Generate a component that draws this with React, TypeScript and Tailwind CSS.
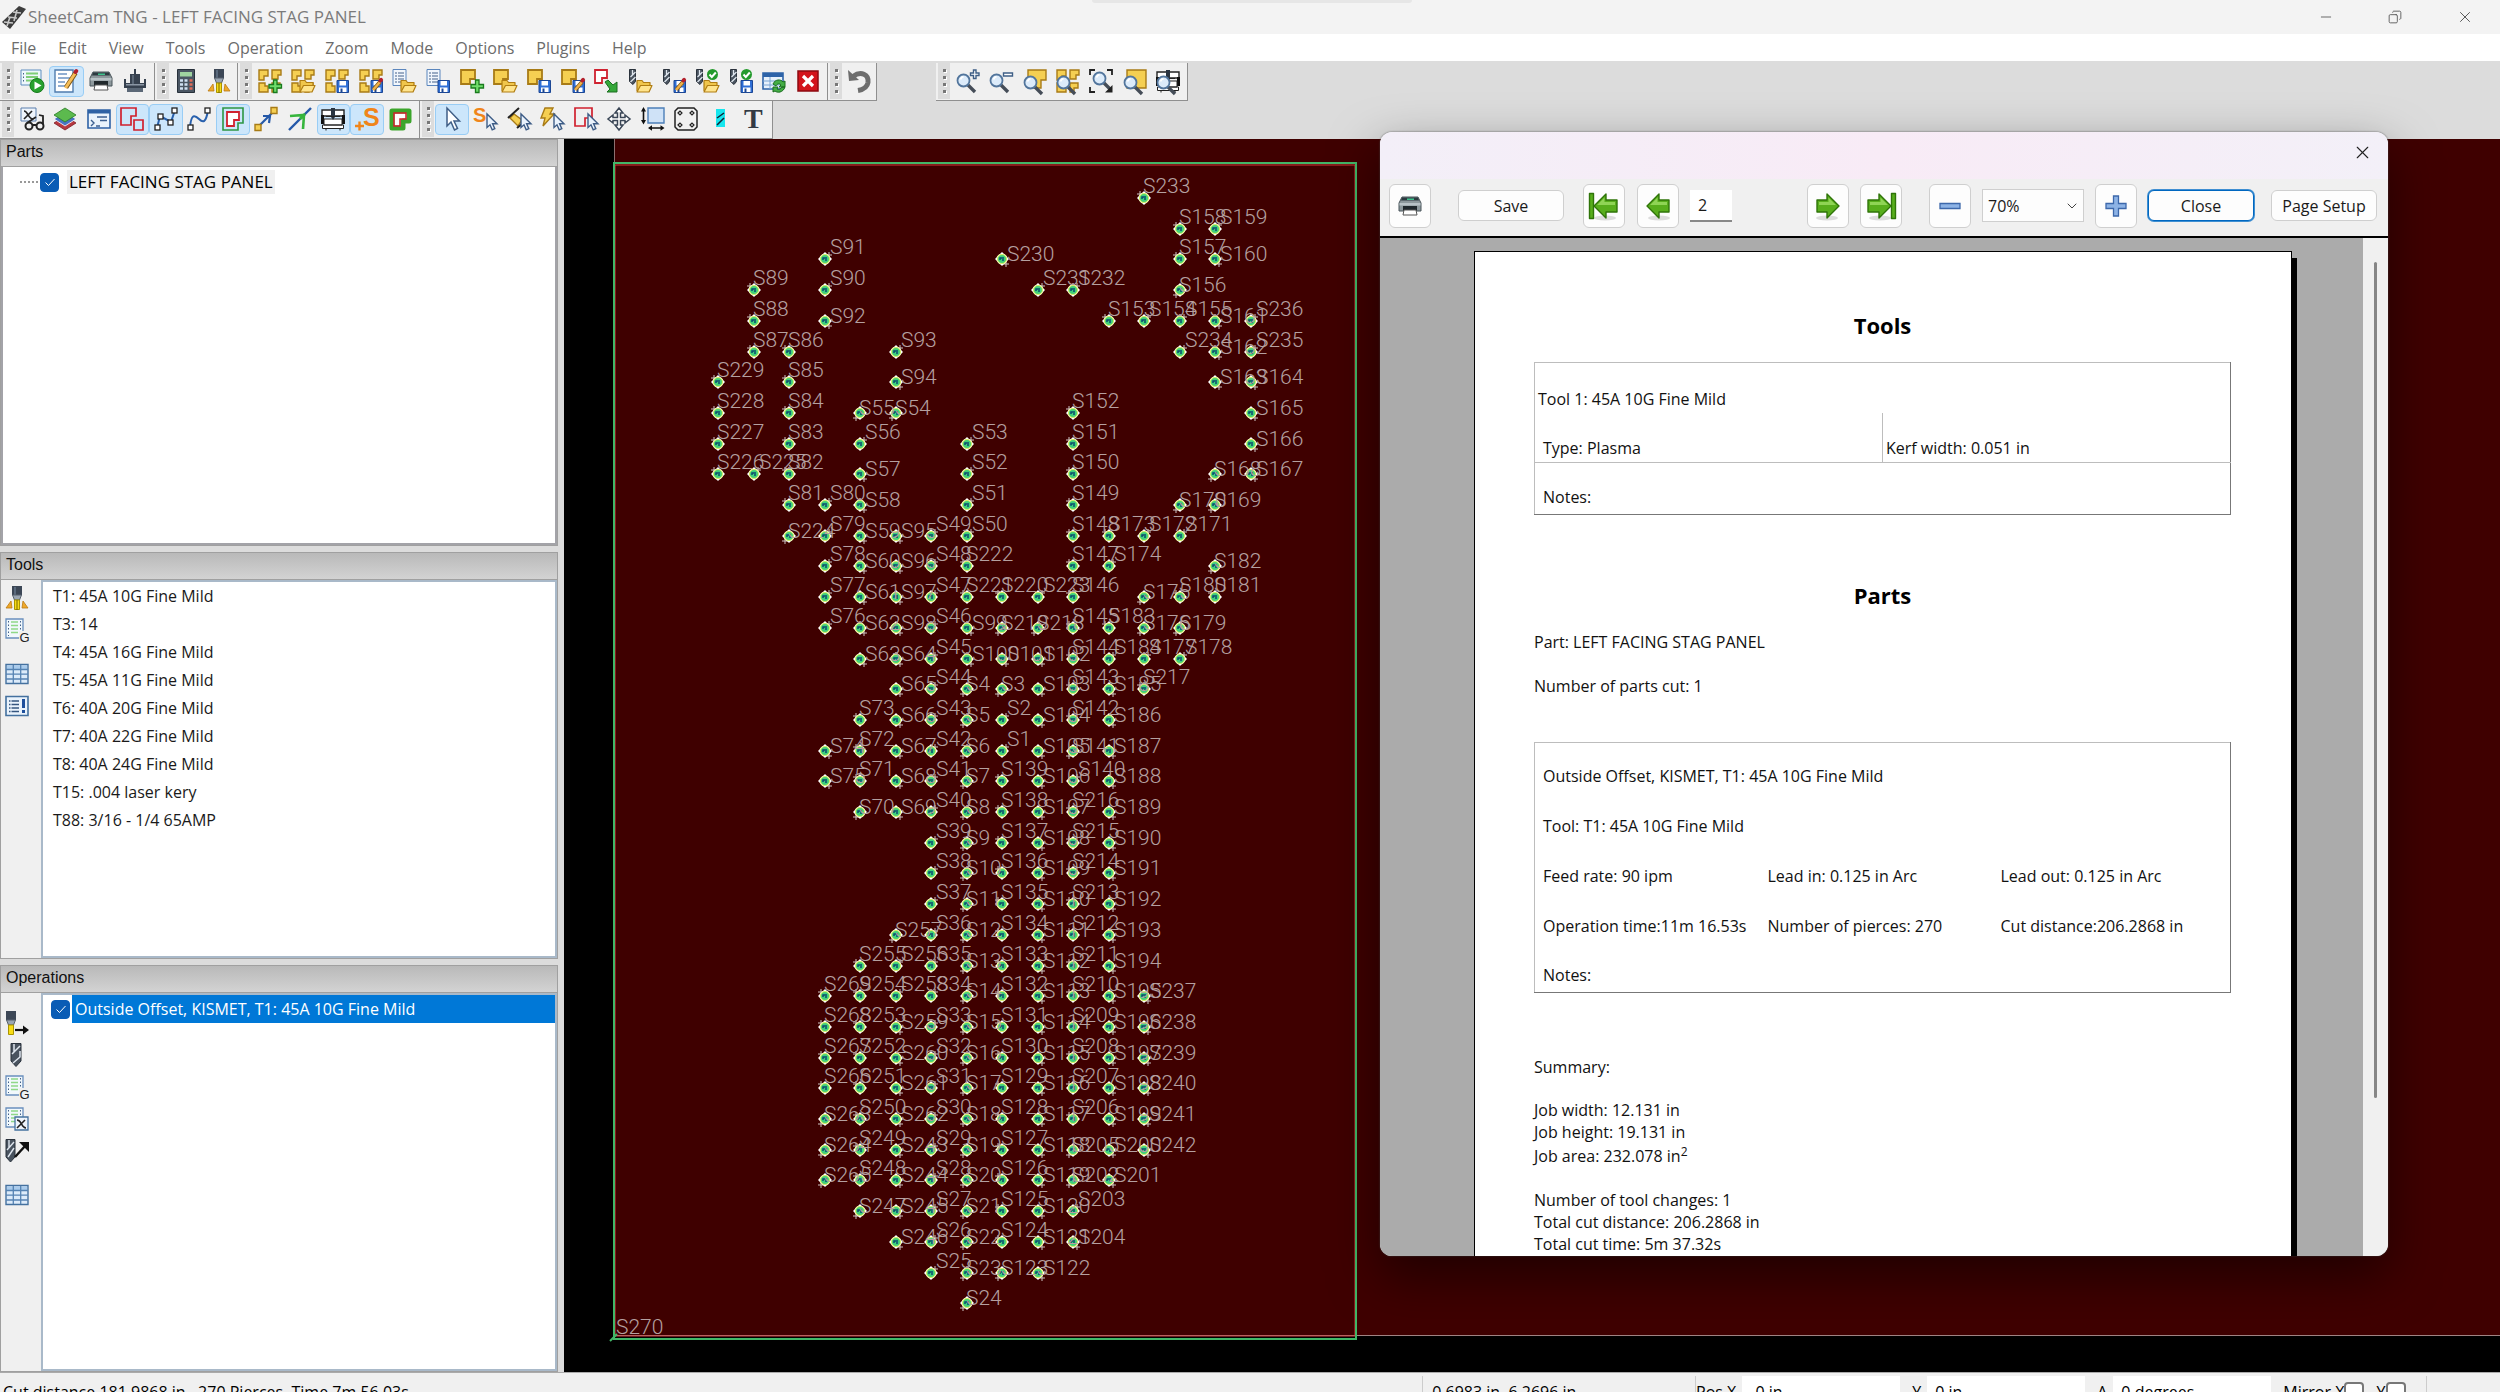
import type { ReactNode } from "react";
import clsx from "clsx";
import { ChevronDown, Copy, Minus, X } from "lucide-react";

/* ---------- icon building blocks, all on a 24x24 grid ---------- */

function Icon({ children }: { children: ReactNode }) {
  return (
    <svg viewBox="0 0 24 24" className="size-6 overflow-visible" fill="none" aria-hidden="true">
      {children}
    </svg>
  );
}

const gold = { fill: "#f5cf52", stroke: "#a87b16", strokeWidth: 1.4 };

const Nest = () => (
  <path {...gold} d="M1 1h9v6H6v4H1zM14 1h9v5h-3v4h-6zM1 14h6v3h3v6H1zM14 14h8v5h-4v4h-4z" />
);
const Part = () => <path {...gold} strokeWidth={1.8} d="M1 1h14v9h-5v5H1z" />;
const Plus = () => (
  <path
    fill="#6fdc6a"
    stroke="#197a1d"
    strokeWidth="1.3"
    d="M15.5 11H19v4.5h4.5V19H19v4.5h-3.5V19H11v-3.5h4.5z"
  />
);
const Folder = () => (
  <g stroke="#b07d12" strokeWidth="1.2" strokeLinejoin="round">
    <path fill="#f0c64c" d="M9 22V11.500h5l1.500 2H22V17" />
    <path fill="#ffe48c" d="M9 23l3.500-6.500H24L21 23z" />
  </g>
);
const Disk = () => (
  <g>
    <path fill="#2f6fd6" stroke="#1c4794" d="M12 11.500h11.500v12H12z" />
    <path fill="#fff" d="M14.500 12h6.500v4.500h-6.500zM14 18.500h7.500V23H14z" />
    <path fill="#1c4794" d="M15.500 19.500h2V23h-2z" />
  </g>
);
const Pencil = () => (
  <g>
    <path stroke="#7d5411" strokeWidth="4" d="M14.500 20.500l6.500-7.500" />
    <path stroke="#f0b24a" strokeWidth="2.6" d="M14 21l7-8" />
    <path stroke="#b3202c" strokeWidth="4" strokeLinecap="round" d="M21.500 11.500l.6-.6" />
  </g>
);
const Bit = () => (
  <g>
    <path fill="#49535f" stroke="#2a323c" d="M1.500.5h6v12L5 15.500l-3.500-3z" />
    <path stroke="#dfe6ee" strokeWidth="1.3" d="M4.500 1v5M7.500 3l-5 5M7.500 8l-5 5" />
  </g>
);
const Good = () => (
  <g>
    <circle cx="17.5" cy="5.5" r="5.5" fill="#239a2c" />
    <path stroke="#fff" strokeWidth="2" d="M14.500 5.500l2.300 2.500 4-4.500" />
  </g>
);
const Doc = () => (
  <g>
    <path fill="#f1f6fc" stroke="#5b86bd" d="M1 .5h13v16H1z" />
    <path stroke="#44618a" strokeWidth="1.2" strokeDasharray="2 1 8" d="M3 4h9M3 7h9M3 10h9M3 13h9" />
  </g>
);
const Torch = () => (
  <g>
    <path fill="#3c4756" d="M7 0h10v9H7z" />
    <path fill="#5a6a7d" d="M9 1h2v8H9z" />
    <path fill="#9aa6b3" stroke="#56616e" d="M7.500 9h9l-2 5h-5z" />
    <path fill="#f8dc15" stroke="#a99400" d="M9.500 14h5v9.500h-5z" />
    <path stroke="#7a6a00" d="M12 14v10" />
    <path fill="#f0a92a" stroke="#ba7a12" strokeWidth=".8" d="M6 15L1 22h6zM18 15l5 7h-6z" />
  </g>
);
const Glass = () => (
  <g>
    <path stroke="#454d58" strokeWidth="3.4" d="M12 16l7 7" />
    <circle cx="7.5" cy="11.5" r="6" fill="#dcebfa" stroke="#52759c" strokeWidth="1.8" />
    <path stroke="#fff" strokeWidth="1.8" d="M4.500 10.500a4 4 0 013-2.800" />
  </g>
);
const LowGlass = () => (
  <g transform="translate(0 2)">
    <Glass />
  </g>
);
const SmallArrow = () => (
  <path
    fill="#eaf3fd"
    stroke="#3d5c86"
    strokeWidth="1.4"
    d="M14 7v13.500l3-2.700 2.200 5 2.600-1.200-2.200-4.800H24z"
  />
);
const Machine = () => (
  <g>
    <path fill="#fff" stroke="#222" strokeWidth="1.4" d="M1 3h22v6H1z" />
    <path fill="#111" d="M0 8h3v9H0zM21 8h3v9h-3z" />
    <path fill="#fff" stroke="#222" d="M3 12h18v6H3zM1.500 18h21v3.500h-21z" />
    <path fill="#2a3440" d="M10 1h4v9l-2 3-2-3z" />
    <path stroke="#222" d="M5 9.500h14M5 22v1.500M19 22v1.500" />
  </g>
);
const Node = ({ x, y }: { x: number; y: number }) => (
  <rect x={x} y={y} width="5" height="5" fill="#fff" stroke="#222" strokeWidth="1.3" />
);
const Grid = () => (
  <g>
    <path fill="#dcebfa" stroke="#44719f" strokeWidth="1.4" d="M1 2.500h22v19H1z" />
    <path fill="#a9cbec" d="M2 3.500h20V7H2z" />
    <path stroke="#5583b3" strokeWidth="1.3" d="M1 7.500h22M1 12.200h22M1 17h22M8.300 3v18M15.700 3v18" />
  </g>
);
const CodeSheet = () => (
  <g>
    <path fill="#f1f8fc" stroke="#6a8fbd" strokeWidth="1.3" d="M1 1h17v19H1z" />
    <path stroke="#8ed888" strokeWidth="1.7" d="M6 4h7M6 7.500h7M6 11h7M6 14.500h7" />
    <path stroke="#44618a" strokeDasharray="1.5 2" d="M3.500 3v15M15.500 3v11" />
  </g>
);

type LetterProps = { x: number; y: number; size: number; color: string; serif?: boolean; children: string };

const Letter = ({ x, y, size, color, serif, children }: LetterProps) => (
  <text
    x={x}
    y={y}
    fontSize={size}
    fill={color}
    fontWeight="bold"
    fontFamily={serif ? "Liberation Serif, serif" : "Liberation Sans, sans-serif"}
  >
    {children}
  </text>
);

function PrinterIcon() {
  return (
    <Icon>
      <path fill="#8d989c" stroke="#49545a" d="M4 3h16l3 6v8H1V9z" />
      <path fill="#2c3a40" d="M4 3.500h16l1 3H3z" />
      <path fill="#3fc28d" d="M9 4.500h7V6H9z" />
      <path fill="#b8c2c6" d="M1.500 9h21v2.500h-21z" />
      <path fill="#20282c" d="M5 12h14v5H5z" />
      <path fill="#fff" stroke="#555" d="M6 16h12l1 5H5z" />
    </Icon>
  );
}

/* ---------- toolbars ---------- */

type Tool = { name: string; icon: ReactNode; active?: boolean };

const jobTools: Tool[] = [
  {
    name: "Run post processor",
    icon: (
      <Icon>
        <path fill="#eef7fb" stroke="#5f8fc0" d="M1 1h20v15H1z" />
        <path stroke="#7fce78" strokeWidth="1.8" d="M6 4.500h12M6 8h12M6 11.500h7" />
        <path stroke="#44618a" strokeDasharray="1.5 2" d="M3.500 4v10" />
        <circle cx="17" cy="16.5" r="7" fill="#28a12e" stroke="#157a1b" />
        <path fill="#fff" d="M14.500 12.500l7 4-7 4z" />
      </Icon>
    ),
  },
  {
    name: "Edit job",
    active: true,
    icon: (
      <Icon>
        <path fill="#fff" stroke="#4f7cae" strokeWidth="1.4" d="M1 1h18v22H1z" />
        <path stroke="#6d94c4" strokeWidth="1.5" d="M4 5h9M4 9h12M4 13h7M4 17h8" />
        <path stroke="#7d5411" strokeWidth="4.6" d="M12 18.500L21.500 4" />
        <path stroke="#f5bd58" strokeWidth="3" d="M11.500 19L21 4.500" />
        <path stroke="#b3202c" strokeWidth="4" strokeLinecap="round" d="M21.500 3l.8-1" />
      </Icon>
    ),
  },
  { name: "Print", icon: <PrinterIcon /> },
  {
    name: "Machine setup",
    icon: (
      <Icon>
        <path fill="#36414f" d="M11 0h2v5h4v9h4v-4h2v9H1v-9h2v4h4V5h4z" />
        <path fill="#5b6877" d="M9 6h2v9H9zM4 19h16v4H4z" />
        <path fill="#8b97a5" d="M3 15h18v1.500H3z" />
      </Icon>
    ),
  },
];

const calcTools: Tool[] = [
  {
    name: "Calculator",
    icon: (
      <Icon>
        <path fill="#4a5663" stroke="#27303a" d="M3.500.5h17v23h-17z" />
        <path fill="#9fd3a0" d="M6 3h12v4.500H6z" />
        <path stroke="#cfe0f2" strokeWidth="2.6" strokeDasharray="3 1.5" d="M6 11.500h8M6 15.500h8M6 19.500h8" />
        <path stroke="#e06c5a" strokeWidth="2.6" d="M15.500 11.500h3M15.500 15.500h3M15.500 19.500h3" />
      </Icon>
    ),
  },
  { name: "New plasma tool", icon: <Icon><Torch /></Icon> },
];

const fileTools: Tool[] = [
  { name: "New job", icon: <Icon><Nest /><Plus /></Icon> },
  { name: "Open job", icon: <Icon><Nest /><Folder /></Icon> },
  { name: "Save job", icon: <Icon><Nest /><Disk /></Icon> },
  { name: "Save job as", icon: <Icon><Nest /><Disk /><Pencil /></Icon> },
  { name: "Open template", icon: <Icon><Doc /><Folder /></Icon> },
  { name: "Save template", icon: <Icon><Doc /><Disk /></Icon> },
  { name: "New part", icon: <Icon><Part /><Plus /></Icon> },
  { name: "Open part", icon: <Icon><Part /><Folder /></Icon> },
  { name: "Save part", icon: <Icon><Part /><Disk /></Icon> },
  { name: "Save part as", icon: <Icon><Part /><Disk /><Pencil /></Icon> },
  {
    name: "Import drawing",
    icon: (
      <Icon>
        <path fill="#fff" stroke="#cf2230" strokeWidth="1.8" d="M1 1h12v8H8v5H1z" />
        <path fill="#35a83a" stroke="#1a6d1f" d="M11 13l3-2 5 5 4-3v10H13l3-3z" />
      </Icon>
    ),
  },
  { name: "Open tool set", icon: <Icon><Bit /><Folder /></Icon> },
  { name: "Save tool set", icon: <Icon><Bit /><Disk /><Pencil /></Icon> },
  { name: "Open operations", icon: <Icon><Bit /><Folder /><Good /></Icon> },
  { name: "Save operations", icon: <Icon><Bit /><Disk /><Good /></Icon> },
  {
    name: "Reload",
    icon: (
      <Icon>
        <path fill="#e7f1fb" stroke="#2d63a8" strokeWidth="1.6" d="M1 4h20v16H1z" />
        <path fill="#2d63a8" d="M1 4h20v4H1z" />
        <path stroke="#7aa5d3" d="M1 12h20M1 16h20M8 8v12" />
        <path
          fill="#44ad45"
          stroke="#1a6d1f"
          d="M11 15c2-5 8-5 10-2l2-1v6h-6l2-2c-2-2-4-1-5 1zM23 18c-2 6-8 6-10 4l-2 1v-5h5l-1 2c2 1 4 0 5-2z"
        />
      </Icon>
    ),
  },
  {
    name: "Stop",
    icon: (
      <Icon>
        <path fill="#d3141c" stroke="#8d0a10" strokeWidth="1.5" d="M2 2h20v20H2z" />
        <path stroke="#fff" strokeWidth="3.2" d="M7 7l10 10M17 7L7 17" />
      </Icon>
    ),
  },
];

const undoTools: Tool[] = [
  {
    name: "Undo",
    icon: (
      <Icon>
        <path stroke="#6d6d6d" strokeWidth="5" d="M6 7.500c8-6 16-2 15 6-.6 4-4 7-10 8" />
        <path fill="#6d6d6d" d="M1 1l1 11 10-1z" />
      </Icon>
    ),
  },
];

const zoomTools: Tool[] = [
  {
    name: "Zoom in",
    icon: (
      <Icon>
        <Glass />
        <path fill="#fff" stroke="#3f5f86" strokeWidth="1.4" d="M17.500 1H20v3h3v2.500h-3v3h-2.500v-3h-3V4h3z" />
      </Icon>
    ),
  },
  {
    name: "Zoom out",
    icon: (
      <Icon>
        <Glass />
        <path fill="#fff" stroke="#3f5f86" strokeWidth="1.4" d="M14.500 4h9v3h-9z" />
      </Icon>
    ),
  },
  { name: "Zoom to part", icon: <Icon><path {...gold} d="M5 1h18v10h-5v8H9V9H5z" /><LowGlass /></Icon> },
  { name: "Zoom to nest", icon: <Icon><Nest /><LowGlass /></Icon> },
  {
    name: "Zoom to fit",
    icon: (
      <Icon>
        <g transform="translate(3 -2)"><Glass /></g>
        <path stroke="#222" strokeWidth="1.8" d="M1 6V1h5M18 1h5v5M1 18v5h5" />
        <path fill="#222" d="M23.500 16v7.500H16z" />
      </Icon>
    ),
  },
  { name: "Zoom to material", icon: <Icon><path {...gold} d="M4 1h19v18H4z" /><LowGlass /></Icon> },
  { name: "Zoom to machine", icon: <Icon><Machine /><LowGlass /></Icon> },
];

const viewTools: Tool[] = [
  {
    name: "Show variables",
    icon: (
      <Icon>
        <path fill="#eef4fb" stroke="#5b7fae" d="M1 1h15v13H1z" />
        <path stroke="#222" strokeWidth="1.7" d="M4 4c4 0 4 8 9 8M12 4l-8 8" />
        <circle cx="9" cy="19" r="3.5" stroke="#222" strokeWidth="2" />
        <circle cx="20" cy="19" r="3.5" stroke="#222" strokeWidth="2" />
        <path stroke="#222" strokeWidth="1.8" d="M7 16l9-6M12.500 18h4M23 17V9l-4-1" />
      </Icon>
    ),
  },
  {
    name: "Layers",
    icon: (
      <Icon>
        <path fill="#b8383f" stroke="#7e1d24" strokeWidth=".8" d="M12 9l11 7-11 7-11-7z" />
        <path fill="#4a74c4" stroke="#fff" strokeWidth=".8" d="M12 5l11 7-11 7-11-7z" />
        <path fill="#5cba4e" stroke="#2a7d24" strokeWidth=".8" d="M12 1l11 7-11 7L1 8z" />
      </Icon>
    ),
  },
  {
    name: "Console",
    icon: (
      <Icon>
        <path fill="#eaf3fc" stroke="#2f62a5" strokeWidth="1.6" d="M1 3h22v18H1z" />
        <path fill="#2f62a5" d="M1 3h22v3.500H1z" />
        <path stroke="#3c5f90" strokeWidth="1.4" d="M10 10h10M13 13.500h7M4 13l3 3-3 3M9 19h4" />
      </Icon>
    ),
  },
  {
    name: "Show paths",
    active: true,
    icon: (
      <Icon>
        <path stroke="#d0202e" strokeWidth="1.7" d="M1 1h15v8h-5v9H1zM14 13h9v10h-9z" />
      </Icon>
    ),
  },
  {
    name: "Show segments",
    active: true,
    icon: (
      <Icon>
        <path stroke="#2860ad" strokeWidth="2" d="M3 21l3-12 11 6 4-12" />
        <Node x={1} y={18} /><Node x={4} y={7} /><Node x={14} y={13} /><Node x={18} y={1} />
      </Icon>
    ),
  },
  {
    name: "Show curves",
    icon: (
      <Icon>
        <path stroke="#2860ad" strokeWidth="2" d="M3 21C4 6 8 8 12 12s7 4 9-9" />
        <Node x={1} y={18} /><Node x={18} y={1} />
      </Icon>
    ),
  },
  {
    name: "Show offsets",
    active: true,
    icon: (
      <Icon>
        <path stroke="#2c9744" strokeWidth="1.6" d="M2 1h20v15h-5v7H2z" />
        <path fill="#fff" stroke="#d0202e" strokeWidth="1.8" d="M6 5h12v8h-5v6H6z" />
      </Icon>
    ),
  },
  {
    name: "Show rapids",
    icon: (
      <Icon>
        <path stroke="#2458a8" strokeWidth="2.2" d="M4 20L20 4M9 9h7l-1 7" />
        <path {...gold} d="M1 17.500h6v6H1zM17 .5h6v6h-6z" />
      </Icon>
    ),
  },
  {
    name: "Show direction",
    icon: (
      <Icon>
        <path stroke="#2458a8" strokeWidth="2.4" d="M1 23L23 1" />
        <path stroke="#36b53c" strokeWidth="2.6" d="M2 9l14-1-1 14M17 7l-5 5" />
      </Icon>
    ),
  },
  { name: "Show machine", active: true, icon: <Icon><Machine /></Icon> },
  {
    name: "Show start points",
    active: true,
    icon: (
      <Icon>
        <Letter x={8} y={19} size={25} color="#f0851a">S</Letter>
        <path stroke="#f0851a" strokeWidth="2.4" d="M0 19h9M4.500 14.500v9" />
      </Icon>
    ),
  },
  {
    name: "Show cut width",
    icon: (
      <Icon>
        <path fill="#fff" stroke="#3ca52b" strokeWidth="5" strokeLinejoin="round" d="M4 4h17v10h-6v7H4z" />
        <path stroke="#d0202e" strokeWidth="1.5" d="M6 6h12v6h-6v7H6z" />
      </Icon>
    ),
  },
];

const modeTools: Tool[] = [
  {
    name: "Select",
    active: true,
    icon: (
      <Icon>
        <path fill="#fff" stroke="#3f5e86" strokeWidth="1.5" d="M7 1v18l4-4 3.500 8 3-1.500L14 14h5.500z" />
      </Icon>
    ),
  },
  { name: "Select start point", icon: <Icon><Letter x={0} y={15} size={20} color="#f0851a">S</Letter><SmallArrow /></Icon> },
  {
    name: "Select tab",
    icon: (
      <Icon>
        <path {...gold} d="M7 7l8 6-4 6-8-8z" />
        <path stroke="#222" strokeWidth="2" d="M1 11L12 1M10 21l6-5" />
        <SmallArrow />
      </Icon>
    ),
  },
  { name: "Quick select", icon: <Icon><path {...gold} d="M5 1h8l-3 6h4L3 19l2-8H1z" /><SmallArrow /></Icon> },
  { name: "Select path", icon: <Icon><path stroke="#d0202e" strokeWidth="1.7" d="M1 1h17v10h-7v8H1z" /><SmallArrow /></Icon> },
  {
    name: "Move part",
    icon: (
      <Icon>
        <path
          fill="#fff"
          stroke="#3a4656"
          strokeWidth="1.5"
          d="M12 1l4 5h-2.500v4.500H18V8l5 4-5 4v-2.500h-4.500V18H16l-4 5-4-5h2.500v-4.500H6V16l-5-4 5-4v2.500h4.500V6H8z"
        />
      </Icon>
    ),
  },
  {
    name: "Measure",
    icon: (
      <Icon>
        <path fill="#cfe2f7" stroke="#4c7fb8" strokeWidth="1.4" d="M7 1h16v15H7z" />
        <path stroke="#111" strokeWidth="1.6" d="M2.500 3v12M9 21h12" />
        <path fill="#111" d="M2.500 0L5 4.500H0zM2.500 17.500L5 13H0zM7 21l4-2.800v5.600zM23.500 21l-4-2.800v5.600z" />
      </Icon>
    ),
  },
  {
    name: "Tabs",
    icon: (
      <Icon>
        <path stroke="#222" strokeWidth="1.5" d="M4 1h16l3 3v16l-3 3H4l-3-3V4z" />
        <path stroke="#222" strokeWidth="1.2" d="M4 6l2-2 2 2-2 2zM16 6l2-2 2 2-2 2zM4 18l2-2 2 2-2 2zM16 18l2-2 2 2-2 2z" />
      </Icon>
    ),
  },
  {
    name: "Hatch",
    icon: (
      <Icon>
        <path fill="#16e6ee" d="M8 2h9v18H8z" />
        <path stroke="#123" strokeWidth="1.5" d="M9 11l7-5M9 18l7-7" />
      </Icon>
    ),
  },
  { name: "Text", icon: <Icon><Letter serif x={3} y={21} size={28} color="#333a44">T</Letter></Icon> },
];

function Toolbar({ tools, className }: { tools: Tool[]; className: string }) {
  return (
    <div
      role="toolbar"
      className={clsx(
        "flex h-full shrink-0 items-center border-r border-b border-[#8f8f8f] bg-[#f0f0f0] pr-0.5 pb-px",
        className
      )}
    >
      <div className="mr-px ml-0.5 flex h-full w-3 shrink-0 flex-col items-center justify-center gap-1 bg-[#dcdcdc]">
        {[0, 1, 2, 3].map((n) => (
          <span key={n} className="size-[3px] bg-[#777] shadow-[1px_1px_0_#fff]" />
        ))}
      </div>
      {tools.map((tool) => (
        <button
          key={tool.name}
          aria-label={tool.name}
          className={clsx(
            "flex h-[31px] flex-1 items-center justify-center rounded-sm border",
            tool.active ? "border-[#99cdf5] bg-[#cce6fb]" : "border-transparent"
          )}
        >
          {tool.icon}
        </button>
      ))}
    </div>
  );
}

/* ---------- left hand panels ---------- */

const toolList = [
  "T1: 45A 10G Fine Mild",
  "T3: 14",
  "T4: 45A 16G Fine Mild",
  "T5: 45A 11G Fine Mild",
  "T6: 40A 20G Fine Mild",
  "T7: 40A 22G Fine Mild",
  "T8: 40A 24G Fine Mild",
  "T15: .004 laser kery",
  "T88: 3/16 - 1/4 65AMP",
];

const ruledIcon = (
  <Icon>
    <Grid />
  </Icon>
);
const codeIcon = (
  <Icon>
    <CodeSheet />
    <path fill="#f0f0f0" d="M14 13h10v11H14z" />
    <text x="14.5" y="23.5" fontSize="13" fill="#222" fontFamily="Liberation Sans, sans-serif">
      G
    </text>
  </Icon>
);

const toolSide: Tool[] = [
  { name: "Add plasma tool", icon: <Icon><Torch /></Icon> },
  { name: "Add code tool", icon: codeIcon },
  { name: "Tool table", icon: ruledIcon },
  {
    name: "Tool notes",
    icon: (
      <Icon>
        <path fill="#eaf3fc" stroke="#44719f" strokeWidth="1.6" d="M1 2.500h22v19H1z" />
        <path stroke="#35557f" strokeWidth="1.4" strokeDasharray="1.5 1 8" d="M4 7h10M4 10.500h10M4 14h10M4 17.500h10" />
        <path stroke="#1d4f9c" strokeWidth="3" d="M18.500 5v9M18.500 16v3" />
      </Icon>
    ),
  },
];

const operationSide: Tool[] = [
  {
    name: "New plasma operation",
    icon: (
      <Icon>
        <path fill="#3c4756" d="M1 0h10v9H1z" />
        <path fill="#9aa6b3" stroke="#56616e" d="M1.500 9h9l-2 5h-5z" />
        <path fill="#f8dc15" stroke="#a99400" d="M3.500 14h5v9.500h-5z" />
        <path stroke="#111" strokeWidth="2.2" d="M10 19h9" />
        <path fill="#111" d="M18 14.500l6 4.500-6 4.500z" />
      </Icon>
    ),
  },
  {
    name: "New drilling operation",
    icon: (
      <Icon>
        <path fill="#49535f" stroke="#2a323c" d="M6 .5h10V18l-5 5.500L6 18z" />
        <path stroke="#dfe6ee" strokeWidth="1.5" d="M9 1v8M15 3l-8 8M15 8v6l-7 6" />
      </Icon>
    ),
  },
  { name: "Insert code", icon: codeIcon },
  {
    name: "Insert variable",
    icon: (
      <Icon>
        <CodeSheet />
        <path fill="#eef4fb" stroke="#44719f" strokeWidth="1.3" d="M10 10h13v13H10z" />
        <path stroke="#222" strokeWidth="1.6" d="M12 13c5 0 4 8 9 8M20 13l-8 8" />
      </Icon>
    ),
  },
  {
    name: "Move operation",
    icon: (
      <Icon>
        <path fill="#49535f" stroke="#2a323c" d="M1 .5h9V18l-4.500 5L1 18z" />
        <path stroke="#dfe6ee" strokeWidth="1.4" d="M4 1v8M9 3l-7 8M9 9l-6 9" />
        <path stroke="#111" strokeWidth="2.4" d="M10 18L21 6" />
        <path fill="#111" d="M14 3h10v10z" />
      </Icon>
    ),
  },
  { name: "Operation table", icon: ruledIcon },
];

function SideTools({ tools, className, gapBefore }: { tools: Tool[]; className: string; gapBefore: string }) {
  return (
    <div className={clsx("flex w-10 shrink-0 flex-col items-start gap-2 bg-[#f0f0f0] pl-1", className)}>
      {tools.map((tool) => (
        <button key={tool.name} aria-label={tool.name} className={clsx(tool.name === gapBefore && "mt-3")}>
          {tool.icon}
        </button>
      ))}
    </div>
  );
}

function Panel({ title, children }: { title: string; children: ReactNode }) {
  return (
    <section className="flex min-h-0 flex-1 flex-col border border-[#a0a0a0] bg-white">
      <h2 className="h-[27px] shrink-0 border-b border-[#a0a0a0] bg-linear-to-b from-[#b9b9b9] to-[#d3d3d3] pl-[5px] font-['Liberation_Sans',sans-serif] text-base leading-6 text-[#111]">
        {title}
      </h2>
      <div className="flex min-h-0 flex-1">{children}</div>
    </section>
  );
}

function Tick({ id }: { id: string }) {
  return (
    <span className="grid shrink-0 place-items-center">
      <input
        id={id}
        type="checkbox"
        defaultChecked
        className="col-start-1 row-start-1 size-[19px] appearance-none rounded-sm border border-[#777] bg-white checked:border-[#0a5cb5] checked:bg-[#0a5cb5]"
      />
      <svg
        viewBox="0 0 12 12"
        className="pointer-events-none col-start-1 row-start-1 size-3"
        fill="none"
        stroke="#fff"
      >
        <path d="M1.500 6.500l3 3 6-6.500" />
      </svg>
    </span>
  );
}

/* ---------- nest drawing ---------- */

// One string per grid row: column, pierce number, label corner.
// a = above, b = above right, c = below, d = below right
const pierceRows = [
  "12-233a",
  "13-158a 14-159b",
  "3-91b 8-230d 13-157a 14-160d",
  "1-89a 3-90b 9-231b 10-232b 13-156c",
  "1-88a 3-92d 11-153a 12-154b 13-155b 14-161d 15-236b",
  "1-87a 2-86a 5-93b 13-234b 14-162d 15-235b",
  "0-229a 2-85a 5-94d 14-163d 15-164d",
  "0-228a 2-84a 4-55c 5-54c 10-152a 15-165d",
  "0-227a 2-83a 4-56b 7-53b 10-151a 15-166d",
  "0-226a 1-225b 2-82a 4-57d 7-52b 10-150a 14-168c 15-167d",
  "2-81a 3-80b 4-58d 7-51b 10-149a 13-170c 14-169c",
  "2-224c 3-79b 4-59d 5-95d 6-49b 7-50b 10-148a 11-173a 12-172b 13-171b",
  "3-78b 4-60d 5-96d 6-48b 7-222a 10-147a 11-174b 14-182c",
  "3-77b 4-61d 5-97d 6-47b 7-221a 8-220a 9-223b 10-146a 12-175c 13-180a 14-181a",
  "3-76b 4-62d 5-98d 6-46b 7-99d 8-219c 9-218c 10-145a 11-183a 12-176c 13-179c",
  "4-63d 5-64d 6-45b 7-100d 8-101d 9-102d 10-144a 11-184b 12-177b 13-178b",
  "5-65d 6-44b 7-4c 8-3c 9-103d 10-143a 11-185d 12-217a",
  "4-73a 5-66d 6-43b 7-5c 8-2b 9-104d 10-142a 11-186d",
  "3-74d 4-72a 5-67d 6-42b 7-6c 8-1b 9-105d 10-141c 11-187d",
  "3-75d 4-71a 5-68d 6-41b 7-7c 8-139a 9-106d 10-140b 11-188d",
  "4-70c 5-69d 6-40b 7-8c 8-138a 9-107d 10-216a 11-189d",
  "6-39b 7-9c 8-137a 9-108d 10-215a 11-190d",
  "6-38b 7-10c 8-136a 9-109d 10-214a 11-191d",
  "6-37b 7-11c 8-135a 9-110d 10-213a 11-192d",
  "5-257c 6-36b 7-12c 8-134a 9-111d 10-212a 11-193d",
  "4-255a 5-256b 6-35b 7-13c 8-133a 9-112d 10-211a 11-194d",
  "3-269a 4-254a 5-258b 6-34b 7-14c 8-132a 9-113d 10-210a 11-195d 12-237d",
  "3-268a 4-253a 5-259d 6-33b 7-15c 8-131a 9-114d 10-209a 11-196d 12-238d",
  "3-267a 4-252a 5-260d 6-32b 7-16c 8-130a 9-115d 10-208a 11-197d 12-239d",
  "3-266a 4-251a 5-261d 6-31b 7-17c 8-129a 9-116d 10-207a 11-198d 12-240d",
  "3-263c 4-250a 5-262d 6-30b 7-18c 8-128a 9-117d 10-206a 11-199d 12-241d",
  "3-264c 4-249a 5-243d 6-29b 7-19c 8-127a 9-118d 10-205c 11-200d 12-242d",
  "3-265c 4-248a 5-244d 6-28b 7-20c 8-126a 9-119d 10-202c 11-201d",
  "4-247c 5-245d 6-27b 7-21c 8-125a 9-120d 10-203b",
  "5-246d 6-26b 7-22c 8-124a 9-121d 10-204d",
  "6-25b 7-23c 8-123c 9-122d",
  "7-24c",
];

const corners: Record<string, { dx: number; dy: number; tx: number; ty: number }> = {
  a: { dx: -1, dy: -5, tx: -4, ty: -4 },
  b: { dx: 5, dy: -5, tx: 4, ty: -4 },
  c: { dx: -1, dy: 2, tx: -4, ty: 5 },
  d: { dx: 5, dy: 2, tx: 4, ty: 5 },
};

const pierces = pierceRows.flatMap((row, r) =>
  row.split(" ").map((entry) => {
    const [, col, id, corner] = entry.match(/(\d+)-(\d+)(\w)/)!;
    return { id, x: Math.round(154 + Number(col) * 35.5), y: Math.round(59 + r * 30.7), ...corners[corner] };
  })
);

function NestView() {
  return (
    <svg className="size-full bg-black font-['Roboto',sans-serif] font-light" fontSize="21">
      <rect x="50" y="0" width="100%" height="1196" fill="#3f0000" />
      <path d="M50.500 0V1196" stroke="#8d7070" />
      <line x1="50" y1="1196.5" x2="100%" y2="1196.5" stroke="#a08484" />
      <rect x="51" y="26" width="740" height="1171" fill="none" stroke="#d23b3b" />
      <rect x="50" y="24" width="742" height="1176" fill="none" stroke="#42b768" strokeWidth="2" />
      <path d="M46 1202l7-7" stroke="#42b768" strokeWidth="2" />
      {pierces.map(({ id, x, y, tx, ty }) => (
        <g key={id}>
          <path d={`M${x + tx - 3} ${y + ty}h6m-3-3v6`} stroke="#cfc4c4" />
          <circle cx={x} cy={y} r="5.5" fill="#e9f5a0" />
          <path d={`M${x} ${y - 7}l7 7-7 7-7-7z`} fill="#fff" />
          <circle cx={x} cy={y} r="4.5" fill="#3fd07c" stroke="#d9ee5a" />
          <path d={`M${x - 2} ${y + 1}v-2h4M${x} ${y + 1}h2`} stroke="#0b4a6e" strokeWidth="1.5" fill="none" />
        </g>
      ))}
      <g fill="#b5a0a0">
        {pierces.map(({ id, x, y, dx, dy }) => (
          <text key={id} x={x + dx} y={y + dy}>
            S{id}
          </text>
        ))}
        <text x="52" y="1195">S270</text>
      </g>
    </svg>
  );
}

/* ---------- print preview window ---------- */

const squareButton =
  "flex h-11 w-[42px] shrink-0 items-center justify-center rounded-md border border-[#cfcfcf] bg-[#fdfdfd]";
const textButton = "h-[31px] w-[106px] shrink-0 rounded-md border bg-[#fdfdfd] text-center";

function GreenArrow({ flip, bar }: { flip?: boolean; bar?: boolean }) {
  return (
    <svg viewBox="0 0 32 32" className={clsx("size-8", flip && "-scale-x-100")} aria-hidden="true">
      <ellipse cx="17" cy="28" rx="11" ry="2.5" fill="#ddd" />
      <g fill="#58ae1c" stroke="#2f7409" strokeWidth="1.4" strokeLinejoin="round">
        {bar && <path d="M1.500 3.500h4v25h-4z" />}
        <path d={bar ? "M6 16L18 4v6h11v12H18v6z" : "M5 16L17 4v6h10v12H17v6z"} />
      </g>
      <path fill="#8fd455" d={bar ? "M9 15l7.500-7.500V12H27v3z" : "M8 15l7.500-7.500V12H25v3z"} />
    </svg>
  );
}

const cell = "h-[50px] pb-[5px] pl-2 text-left align-bottom font-normal";
const frame = "w-full border border-t-[#bdbdbd] border-r-[#777] border-b-[#777] border-l-[#bdbdbd]";
const heading = "text-center text-[22px] leading-[30px] font-bold text-black";

function PreviewWindow() {
  return (
    <div
      role="dialog"
      aria-label="Print preview"
      className="absolute top-[132px] right-[112px] flex h-[1124px] w-[1008px] flex-col overflow-hidden rounded-xl bg-[#f0f0f0] shadow-[0_20px_50px_rgba(0,0,0,0.5),0_0_2px_#555]"
    >
      <div className="flex h-[47px] shrink-0 items-start justify-end bg-linear-to-r from-[#f3eff8] via-[#f8ebf6] to-[#f3f0f8] pt-2.5 pr-[15px]">
        <button aria-label="Close window">
          <X className="size-[21px] text-[#222]" strokeWidth={1.3} />
        </button>
      </div>
      <div className="flex h-[57px] shrink-0 items-center gap-[11px] px-[9px] pb-1 text-base">
        <button aria-label="Print" className={squareButton}>
          <PrinterIcon />
        </button>
        <button className={clsx(textButton, "mx-4 border-[#cfcfcf]")}>Save</button>
        <div className="-ml-2 flex gap-3">
          <button aria-label="First page" className={squareButton}><GreenArrow bar /></button>
          <button aria-label="Previous page" className={squareButton}><GreenArrow /></button>
        </div>
        <input
          aria-label="Page number"
          defaultValue="2"
          className="mr-16 h-8 w-[42px] shrink-0 border-b-2 border-[#888] bg-white px-2"
        />
        <button aria-label="Next page" className={squareButton}><GreenArrow flip /></button>
        <button aria-label="Last page" className={squareButton}><GreenArrow bar flip /></button>
        <button aria-label="Zoom out" className={clsx(squareButton, "ml-4")}>
          <svg viewBox="0 0 24 24" className="size-6">
            <path d="M2 9.500h20v5H2z" fill="#8db3e6" stroke="#3d68ab" strokeWidth="1.3" />
          </svg>
        </button>
        <div className="grid shrink-0 items-center">
          <select
            aria-label="Zoom level"
            className="col-start-1 row-start-1 h-[33px] w-[102px] appearance-none border border-[#cfcfcf] bg-[#fdfdfd] pl-[5px]"
          >
            <option>70%</option>
          </select>
          <ChevronDown
            className="pointer-events-none col-start-1 row-start-1 mr-1 size-4 justify-self-end text-[#444]"
            strokeWidth={1.5}
          />
        </div>
        <button aria-label="Zoom in" className={squareButton}>
          <svg viewBox="0 0 24 24" className="size-6">
            <path
              d="M9.500 2h5v7.500H22v5h-7.500V22h-5v-7.500H2v-5h7.500z"
              fill="#8db3e6"
              stroke="#3d68ab"
              strokeWidth="1.3"
            />
          </svg>
        </button>
        <button className={clsx(textButton, "mr-1.5 border-[#0067c0] shadow-[0_0_0_1px_#3f8fd2]")}>Close</button>
        <button className={clsx(textButton, "border-[#cfcfcf]")}>Page Setup</button>
      </div>
      <div className="flex min-h-0 flex-1 border-t-2 border-black">
        <div className="min-w-0 flex-1 overflow-hidden bg-[#ababab] pt-[13px] pl-[94px]">
          <article className="h-[1100px] w-[818px] border border-black bg-white pt-[58px] pr-[60px] pl-[59px] text-base leading-6 text-[#111] shadow-[5px_7px_0_#000]">
            <h2 className={heading}>Tools</h2>
            <table className={clsx(frame, "mt-[22px]")}>
              <tbody>
                <tr>
                  <td colSpan={2} className="h-[50px] pb-0.5 pl-[3px] align-bottom">Tool 1: 45A 10G Fine Mild</td>
                </tr>
                <tr className="border-b border-[#bdbdbd]">
                  <td className="h-[50px] w-1/2 pb-0.5 pl-2 align-bottom">Type: Plasma</td>
                  <td className="h-[50px] border-l border-[#bdbdbd] pb-0.5 pl-[3px] align-bottom">Kerf width: 0.051 in</td>
                </tr>
                <tr>
                  <td colSpan={2} className="h-[52px] pb-[5px] pl-2 align-bottom">Notes:</td>
                </tr>
              </tbody>
            </table>
            <h2 className={clsx(heading, "mt-[65px]")}>Parts</h2>
            <p className="mt-5">Part: LEFT FACING STAG PANEL</p>
            <p className="mt-5">Number of parts cut: 1</p>
            <table className={clsx(frame, "mt-11 table-fixed")}>
              <colgroup>
                <col className="w-[225px]" />
                <col className="w-[233px]" />
                <col />
              </colgroup>
              <tbody>
                <tr><td colSpan={3} className={cell}>Outside Offset, KISMET, T1: 45A 10G Fine Mild</td></tr>
                <tr><td colSpan={3} className={cell}>Tool: T1: 45A 10G Fine Mild</td></tr>
                <tr>
                  <td className={cell}>Feed rate: 90 ipm</td>
                  <td className={cell}>Lead in: 0.125 in Arc</td>
                  <td className={cell}>Lead out: 0.125 in Arc</td>
                </tr>
                <tr>
                  <td className={cell}>Operation time:11m 16.53s</td>
                  <td className={cell}>Number of pierces: 270</td>
                  <td className={cell}>Cut distance:206.2868 in</td>
                </tr>
                <tr><td colSpan={3} className={cell}>Notes:</td></tr>
              </tbody>
            </table>
            <p className="mt-[62px]">Summary:</p>
            <div className="mt-5 leading-[22px]">
              <p>Job width: 12.131 in</p>
              <p>Job height: 19.131 in</p>
              <p className="pt-0.5">
                Job area: 232.078 in<sup className="text-xs">2</sup>
              </p>
            </div>
            <div className="mt-[22px] leading-[22px]">
              <p>Number of tool changes: 1</p>
              <p>Total cut distance: 206.2868 in</p>
              <p>Total cut time: 5m 37.32s</p>
            </div>
          </article>
        </div>
        <div className="flex w-[25px] shrink-0 justify-center bg-[#f0f0f0] pt-6">
          <div className="h-[836px] w-[3px] rounded-full bg-[#868686]" />
        </div>
      </div>
    </div>
  );
}

/* ---------- page ---------- */

const menus = ["File", "Edit", "View", "Tools", "Operation", "Zoom", "Mode", "Options", "Plugins", "Help"];

function StatusField({ label, value, id }: { label: string; value: string; id: string }) {
  return (
    <>
      <label htmlFor={id} className="shrink-0">{label}</label>
      <input id={id} defaultValue={value} className="mr-3 ml-1.5 h-8 w-[158px] shrink-0 bg-white px-2" />
    </>
  );
}

export default function App() {
  return (
    <div className="relative flex h-screen flex-col overflow-hidden bg-[#dcdcdc] font-['Open_Sans','Noto_Sans',sans-serif] text-base text-[#1a1a1a]">
      <header className="flex h-[34px] shrink-0 items-center bg-[#f3f3f3] text-[#7b7b7b]">
        <svg viewBox="0 0 24 24" className="ml-0.5 size-6" aria-hidden="true">
          <path fill="#3d3d3d" d="M0 17L17 1l7 3L8 24z" />
          <path stroke="#c9c9c9" strokeWidth="1.6" fill="none" d="M2 17l9 1M6 12l9 1M11 7l8 1M5 21l3-9M12 16l3-11" />
        </svg>
        <h1 className="ml-0.5 text-[17px]">SheetCam TNG - LEFT FACING STAG PANEL</h1>
        <div className="ml-auto flex items-center gap-[54px] pr-[26px] text-[#555]">
          <button aria-label="Minimize"><Minus className="size-4" strokeWidth={1.3} /></button>
          <button aria-label="Restore"><Copy className="size-3.5 -scale-x-100" strokeWidth={1.5} /></button>
          <button aria-label="Close"><X className="size-[18px]" strokeWidth={1.3} /></button>
        </div>
      </header>
      <div className="absolute top-0 left-[1092px] h-[3px] w-[320px] rounded-b-full bg-[#e6e6e6]" />
      <nav className="flex h-[27px] shrink-0 items-center gap-[22px] bg-white pl-[11px] text-[#6c6c6c]">
        {menus.map((menu) => (
          <button key={menu}>{menu}</button>
        ))}
      </nav>
      <div className="h-[78px] shrink-0 pt-0.5">
        <div className="flex h-[38px]">
          <Toolbar tools={jobTools} className="w-[155px]" />
          <Toolbar tools={calcTools} className="w-[83px]" />
          <Toolbar tools={fileTools} className="w-[590px]" />
          <Toolbar tools={undoTools} className="w-[49px]" />
          <Toolbar tools={zoomTools} className="ml-[59px] w-[252px]" />
        </div>
        <div className="flex h-[38px]">
          <Toolbar tools={viewTools} className="w-[420px]" />
          <Toolbar tools={modeTools} className="w-[353px]" />
        </div>
      </div>

      <main className="flex min-h-0 flex-1">
        <aside className="flex w-[564px] shrink-0 flex-col gap-1.5 pr-1.5">
          <Panel title="Parts">
            <div className="flex-1 border-2 border-t-0 border-[#a3a3a8] pt-[3px] pl-[17px]">
              <div className="flex h-6 items-center text-[17px]">
                <span className="w-[18px] border-t-2 border-dotted border-[#999]" />
                <span className="ml-0.5 flex"><Tick id="part-1" /></span>
                <label htmlFor="part-1" className="ml-2 bg-[#f0f0f0] px-0.5 leading-6 text-black">
                  LEFT FACING STAG PANEL
                </label>
              </div>
            </div>
          </Panel>
          <Panel title="Tools">
            <SideTools tools={toolSide} className="pt-1.5" gapBefore="Tool table" />
            <ul className="flex-1 border-2 border-[#a9b9c9] pl-2.5">
              {toolList.map((tool) => (
                <li key={tool} className="leading-7">{tool}</li>
              ))}
            </ul>
          </Panel>
          <Panel title="Operations">
            <SideTools tools={operationSide} className="pt-[18px]" gapBefore="Operation table" />
            <div className="flex-1 border-2 border-[#a9b9c9] pl-2">
              <div className="flex h-7 items-center gap-0.5">
                <Tick id="operation-1" />
                <label htmlFor="operation-1" className="flex-1 bg-[#0078d7] pl-[3px] leading-7 text-white">
                  Outside Offset, KISMET, T1: 45A 10G Fine Mild
                </label>
              </div>
            </div>
          </Panel>
        </aside>
        <div className="min-w-0 flex-1">
          <NestView />
        </div>
      </main>

      <footer className="flex h-5 shrink-0 items-start overflow-hidden border-t border-[#aaa] bg-[#f0f0f0] pt-[3px] leading-8 text-black">
        <p className="flex-1 pl-[3px]">Cut distance 181.9868 in , 270 Pierces, Time 7m 56.03s</p>
        <p className="h-8 w-[273px] shrink-0 border-l border-[#ccc] pl-1">-0.6983 in, 6.2696 in</p>
        <div className="flex h-8 w-[731px] shrink-0 border-l border-[#ccc]">
          <StatusField id="pos-x" label="Pos X" value="-0 in" />
          <StatusField id="pos-y" label="Y" value="0 in" />
          <StatusField id="pos-a" label="A" value="0 degrees" />
          <label htmlFor="mirror-x">Mirror X</label>
          <input id="mirror-x" type="checkbox" className="mt-1.5 mr-3 size-5 appearance-none rounded-sm border-2 border-[#777] bg-white" />
          <label htmlFor="mirror-y">Y</label>
          <input id="mirror-y" type="checkbox" className="mt-1.5 ml-px size-5 appearance-none rounded-sm border-2 border-[#777] bg-white" />
        </div>
        <div className="h-8 w-[74px] shrink-0 border-l border-[#ccc]" />
      </footer>

      <PreviewWindow />
    </div>
  );
}
